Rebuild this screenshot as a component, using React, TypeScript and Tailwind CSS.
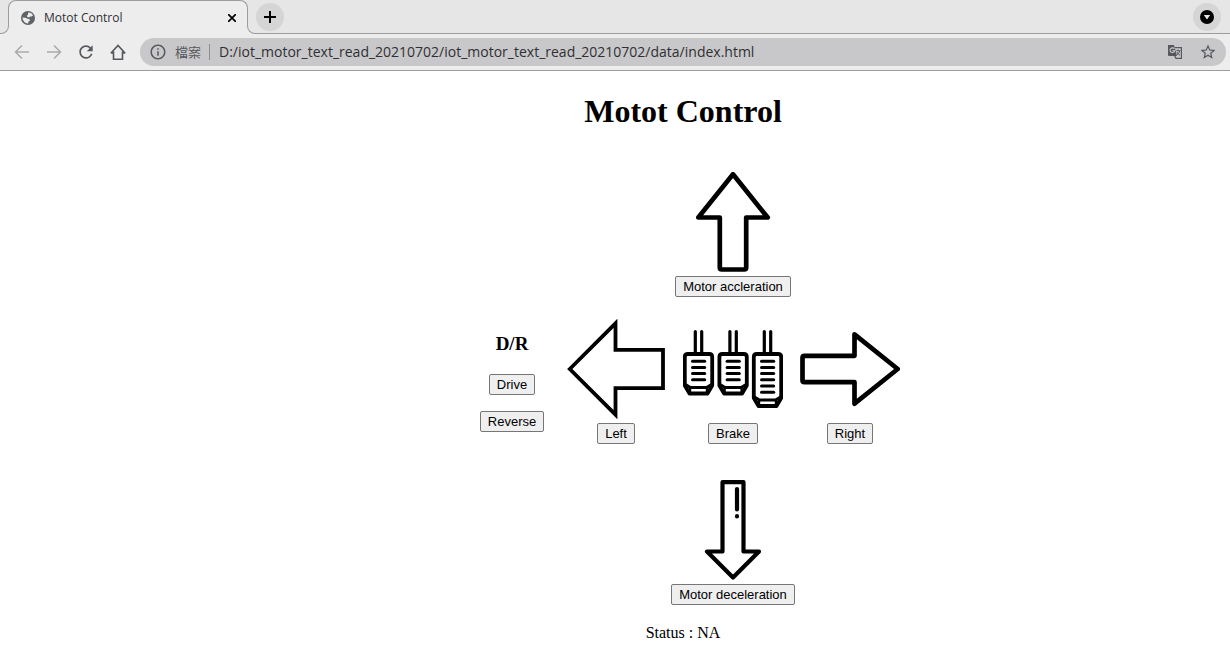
import type { ReactNode } from "react";
import { MdInfoOutline, MdRefresh, MdStarBorder } from "react-icons/md";

function BackIcon({ forward = false }: { forward?: boolean }) {
  return (
    <svg viewBox="0 0 16 16" className="size-4" fill="none" stroke="currentColor" strokeWidth="1.500" aria-hidden="true">
      <path d={forward ? "M1 8h13.500M8 1.500 14.500 8 8 14.500" : "M15 8H1.500M8 1.500 1.500 8 8 14.500"} />
    </svg>
  );
}

function HomeIcon() {
  return (
    <svg viewBox="0 0 16 16" className="size-4" fill="none" stroke="currentColor" strokeWidth="1.600" aria-hidden="true">
      <path d="M.8 9.200 8 1.400l7.200 7.800M3.500 7.500v7.700h9V7.500M1 8.900h2.500M12.500 8.900H15" />
    </svg>
  );
}

function GlobeIcon() {
  return (
    <svg viewBox="0 0 14 14" className="size-[14px]" aria-hidden="true">
      <circle cx="7" cy="7" r="7" fill="#5f6368" />
      <path d="M7.200 1.600C9.300 1.400 11.300 2.600 12.100 4.300L10.500 5.600 8.900 5.500 8.300 6.400 6.400 5.900 5.800 4.700 7 3.800Z" fill="#ededee" />
      <path d="M1.500 6.500 4.500 6.800 6.600 7.800 8.600 8.200 9 9.600 7.500 10.500 7.200 12.400C4.200 12.500 1.600 10 1.500 6.500Z" fill="#ededee" />
    </svg>
  );
}

function TranslateIcon() {
  return (
    <svg viewBox="0 0 16 16" className="size-4" fill="none" aria-hidden="true">
      <path d="M8 3.600H14.400V14.400H9L7.500 11.500" stroke="currentColor" strokeWidth="1.200" />
      <path d="M1 1H7L10 12H2Q1 12 1 11Z" fill="currentColor" />
      <path d="M7.300 4.900A2.300 2.300 0 1 0 7.600 6.800H5.400" stroke="#c8c8ca" strokeWidth="1.100" />
      <path d="M9.300 6.700H13.300M11.200 5.500V6.700M12.600 6.800C12.200 8.800 11.200 10 10 10.800M10 8C10.600 9.500 11.800 10.700 13 11.300" stroke="currentColor" />
    </svg>
  );
}

function SolidArrow({ className = "" }: { className?: string }) {
  return (
    <svg viewBox="0 0 100 100" className={`size-[100px] ${className}`} aria-hidden="true">
      <path
        d="M50 2.300 84.700 45.500H63.200V95.500q0 2-2 2H38.800q-2 0-2-2V45.500H15.300Z"
        fill="none"
        stroke="#000"
        strokeWidth="4.700"
        strokeLinejoin="round"
      />
    </svg>
  );
}

function LeftArrow() {
  return (
    <svg viewBox="0 0 100 100" className="size-[100px]" aria-hidden="true">
      <path d="M3.800 50 49.500 4.300V30.800H97V69.200H49.500V95.700Z" fill="none" stroke="#000" strokeWidth="3.800" />
    </svg>
  );
}

function DownArrow() {
  return (
    <svg
      viewBox="0 0 100 100"
      className="size-[100px]"
      fill="none"
      stroke="#000"
      strokeWidth="4.200"
      strokeLinejoin="round"
      strokeLinecap="round"
      aria-hidden="true"
    >
      <path d="M39.500 2.200H60.500V71.500H76L50 97.500 24 71.500H39.500Z" />
      <path d="M54 9V29.500M54 36.200v.2" />
    </svg>
  );
}

function Pedal({ x, bars, bottom }: { x: number; bars: number; bottom: number }) {
  const side = bottom - 8;
  const pads = Array.from({ length: bars }, (_, i) => 42.2 + i * 6.2);
  return (
    <g transform={`translate(${x} 0)`}>
      <path d="M12.300 12.500V33M18.700 12.500V33" strokeWidth="3.200" />
      <path
        d={`M4.800 35H26.200q3 0 3 3V${side}L24.500 ${bottom}H6.500L1.800 ${side}V38q0-3 3-3Z`}
        strokeWidth="3.800"
      />
      <path d={`M2.500 ${side - 1} 7.500 ${bottom - 6}H23.500L28.500 ${side - 1}`} strokeWidth="2.800" />
      <path d={`M7 ${bottom - 5}V${bottom - 1}M24 ${bottom - 5}V${bottom - 1}`} strokeWidth="2.400" />
      {pads.map((y) => (
        <path key={y} d={`M9.500 ${y}H21.700`} strokeWidth="3" />
      ))}
    </g>
  );
}

function Pedals() {
  return (
    <svg
      viewBox="0 0 100 100"
      className="size-[100px]"
      fill="none"
      stroke="#000"
      strokeLinejoin="round"
      strokeLinecap="round"
      aria-hidden="true"
    >
      <Pedal x={0} bars={4} bottom={74.5} />
      <Pedal x={34.6} bars={4} bottom={74.5} />
      <Pedal x={69} bars={6} bottom={87} />
    </svg>
  );
}

function PushButton({ children }: { children: ReactNode }) {
  return (
    <button
      type="button"
      className="h-[21px] rounded-[2px] border border-[#767676] bg-[#efefef] px-[7px] font-['Liberation_Sans',Arial,sans-serif] text-[13px] leading-none whitespace-nowrap text-black hover:bg-[#e5e5e5]"
    >
      {children}
    </button>
  );
}

function Control({ label, className = "", children }: { label: string; className?: string; children: ReactNode }) {
  return (
    <div className={`flex flex-col items-center gap-1 ${className}`}>
      {children}
      <PushButton>{label}</PushButton>
    </div>
  );
}

function TabStrip() {
  return (
    <div className="flex h-[34px] bg-[#e6e6e7]">
      <div className="z-10 -mr-px h-2 w-[9px] self-end bg-[#ededee]">
        <div className="size-full rounded-br-lg border-r border-b border-[#9c9c9e] bg-[#e6e6e7]" />
      </div>
      <div className="flex w-60 items-center rounded-t-lg border-x border-t border-[#9c9c9e] bg-[#ededee] pr-[7px] pl-3">
        <GlobeIcon />
        <span className="ml-[9px] flex-1 font-['Open_Sans',sans-serif] text-[12px] text-[#2f3033]">Motot Control</span>
        <button type="button" aria-label="Close tab" className="grid size-4 place-items-center">
          <svg viewBox="0 0 8 8" className="size-2" stroke="#000" strokeWidth="1.700" aria-hidden="true">
            <path d="M0 0 8 8M8 0 0 8" />
          </svg>
        </button>
      </div>
      <div className="z-10 -ml-px h-2 w-[9px] self-end bg-[#ededee]">
        <div className="size-full rounded-bl-lg border-b border-l border-[#9c9c9e] bg-[#e6e6e7]" />
      </div>
      <div className="flex flex-1 items-center justify-between border-b border-[#9c9c9e] pr-[9px]">
        <button type="button" aria-label="New tab" className="grid size-7 place-items-center rounded-full bg-[#d5d5d6]">
          <svg viewBox="0 0 12 12" className="size-3" stroke="#000" strokeWidth="2" aria-hidden="true">
            <path d="M6 0V12M0 6H12" />
          </svg>
        </button>
        <button type="button" aria-label="Search tabs" className="grid size-7 place-items-center rounded-full bg-[#d5d5d6]">
          <svg viewBox="0 0 14 14" className="size-[14px]" aria-hidden="true">
            <circle cx="7" cy="7" r="7" fill="#000" />
            <path d="M3.800 5H10.200L7 9.500Z" fill="#e6e6e7" />
          </svg>
        </button>
      </div>
    </div>
  );
}

function Toolbar() {
  return (
    <div className="flex h-[37px] items-center border-b border-[#9c9c9e] bg-[#ededee] pr-1 pl-[14px] text-[#55585c]">
      <div className="flex items-center">
        <button type="button" aria-label="Back" className="text-[#a9aaac]">
          <BackIcon />
        </button>
        <button type="button" aria-label="Forward" className="ml-4 text-[#a9aaac]">
          <BackIcon forward />
        </button>
        <button type="button" aria-label="Reload" className="mx-[14px]">
          <MdRefresh className="size-5" />
        </button>
        <button type="button" aria-label="Home">
          <HomeIcon />
        </button>
      </div>
      <div className="ml-[14px] flex h-7 flex-1 items-center rounded-full bg-[#c8c8ca] pr-[9px] pl-[9px]">
        <MdInfoOutline className="size-[18px]" aria-hidden="true" />
        <label
          htmlFor="address"
          className="ml-2 border-r border-[#8b8c8f] pr-2 font-['Noto_Sans_CJK_TC',sans-serif] text-[13px] leading-4"
        >
          檔案
        </label>
        <input
          id="address"
          type="text"
          defaultValue="D:/iot_motor_text_read_20210702/iot_motor_text_read_20210702/data/index.html"
          className="ml-[9px] min-w-0 flex-1 bg-transparent pb-px font-['Open_Sans',sans-serif] text-[14px] text-[#2f3033] outline-none"
        />
        <button type="button" aria-label="Translate this page">
          <TranslateIcon />
        </button>
        <button type="button" aria-label="Bookmark this page" className="ml-4">
          <MdStarBorder className="size-[18px]" />
        </button>
      </div>
    </div>
  );
}

export default function App() {
  return (
    <div className="min-h-screen bg-white font-['Liberation_Serif','Times_New_Roman',serif] text-black">
      <header>
        <TabStrip />
        <Toolbar />
      </header>
      <main className="flex flex-col items-center pt-[22px] pl-[136px]">
        <h1 className="text-[32px] leading-[37px] font-bold">Motot Control</h1>
        <div className="mt-[42px] grid grid-cols-[108px_100px_134px_100px] pr-2">
          <Control label="Motor accleration" className="col-start-3">
            <SolidArrow />
          </Control>
          <div className="col-start-1 mt-9 flex flex-col items-center">
            <h3 className="text-[19px] leading-[21px] font-bold">D/R</h3>
            <div className="mt-5 flex flex-col items-center gap-4">
              <PushButton>Drive</PushButton>
              <PushButton>Reverse</PushButton>
            </div>
          </div>
          <Control label="Left" className="mt-[22px]">
            <LeftArrow />
          </Control>
          <Control label="Brake" className="mt-[22px]">
            <Pedals />
          </Control>
          <Control label="Right" className="mt-[22px]">
            <SolidArrow className="rotate-90" />
          </Control>
          <Control label="Motor deceleration" className="col-start-3 mt-9">
            <DownArrow />
          </Control>
        </div>
        <p className="mt-[19px] text-[16px] leading-[18px]">Status : NA</p>
      </main>
    </div>
  );
}
